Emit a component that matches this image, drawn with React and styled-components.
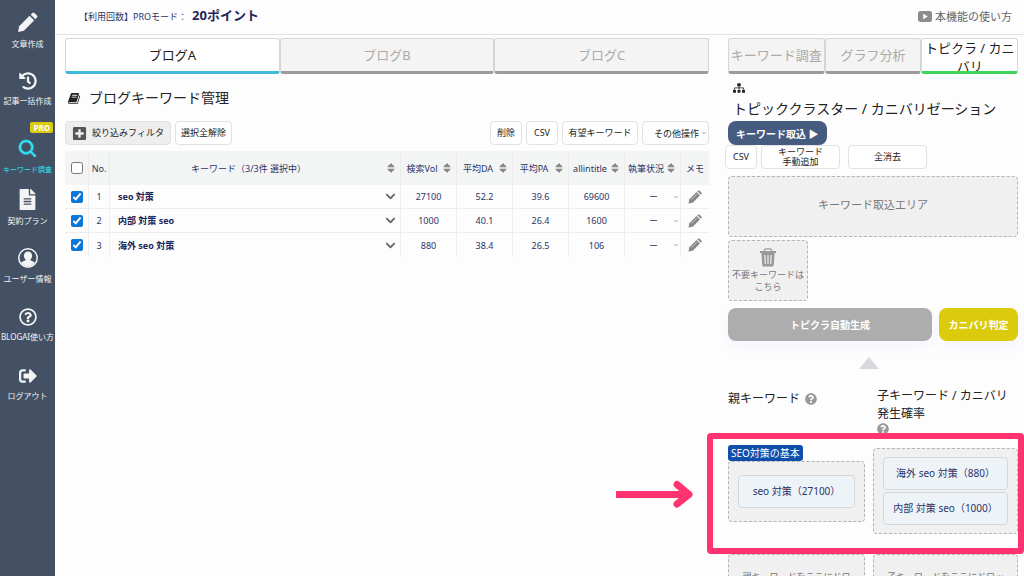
import styled, { createGlobalStyle, ThemeProvider } from "styled-components";
import {
  FaChevronDown,
  FaFileAlt,
  FaHistory,
  FaPlusSquare,
  FaQuestionCircle,
  FaRegQuestionCircle,
  FaSignOutAlt,
  FaSitemap,
  FaSort,
} from "react-icons/fa";
import { IoSearch } from "react-icons/io5";

const theme = {
  colors: {
    sidebar: "#445164",
    navy: "#2b3467",
    text: "#222",
    muted: "#aaa",
    line: "#e2e2e2",
    panel: "#f0f0f0",
    cyan: "#2fe0f5",
    yellow: "#dccb0d",
    mark: "#ff3370",
  },
};

const GlobalStyle = createGlobalStyle`
  * {
    box-sizing: border-box;
  }

  body {
    margin: 0;
    background: #fdfdfe;
    color: ${theme.colors.text};
    font-family: "Noto Sans", "Noto Sans CJK JP", sans-serif;
    font-size: 10px;
  }

  button, select, input {
    font: inherit;
    color: inherit;
    margin: 0;
  }

  h1, h2, h3, p {
    margin: 0;
    font-weight: 400;
  }
`;

const Page = styled.div`
  display: flex;
  height: 100vh;
  overflow: hidden;
`;

const Sidebar = styled.nav`
  flex: none;
  width: 55px;
  background: ${({ theme }) => theme.colors.sidebar};
`;

const NavItem = styled.a`
  display: flex;
  flex-direction: column;
  align-items: center;
  justify-content: center;
  gap: 5px;
  height: 59px;
  padding-top: 2px;
  color: ${({ theme, $active }) => ($active ? theme.colors.cyan : "#f4f4f4")};
  font-size: ${({ $active }) => ($active ? "7px" : "8px")};
  line-height: 12px;
  text-decoration: none;
  white-space: nowrap;

  svg {
    flex: none;
  }
`;

const ProBadge = styled.span`
  align-self: flex-end;
  margin-right: 2px;
  padding: 0 3px;
  border-radius: 2px;
  background: ${({ theme }) => theme.colors.yellow};
  color: white;
  font-size: 8px;
  font-weight: 700;
  line-height: 11px;
`;

const Main = styled.div`
  flex: 1;
  min-width: 0;
  display: flex;
  flex-direction: column;
`;

const Header = styled.header`
  display: flex;
  align-items: center;
  justify-content: space-between;
  flex: none;
  height: 35px;
  padding: 0 12px 6px 24px;
  border-bottom: 1px solid ${({ theme }) => theme.colors.line};
`;

const Usage = styled.p`
  color: ${({ theme }) => theme.colors.navy};
  font-size: 9px;

  strong {
    margin-left: 5px;
    font-size: 13px;
    color: #1d2659;
  }
`;

const HelpLink = styled.a`
  display: flex;
  align-items: center;
  gap: 3px;
  padding-top: 4px;
  color: #666;
  font-size: 11px;
  text-decoration: none;
`;

const Content = styled.div`
  display: grid;
  grid-template-columns: minmax(0, 1fr) 290px;
  gap: 19px;
  padding: 3px 6px 0 10px;
`;

const Tabs = styled.div`
  display: flex;
`;

const Tab = styled.button`
  flex: 1 1 0;
  min-width: 0;
  height: 36px;
  display: flex;
  align-items: safe center;
  justify-content: center;
  overflow: hidden;
  padding: 0;
  border: 1px solid #d6d6d6;
  border-bottom: 3px solid ${({ $accent }) => $accent || "#9c9c9c"};
  border-radius: 3px;
  background: ${({ $accent }) => ($accent ? "white" : "#f4f4f4")};
  color: ${({ theme, $accent }) => ($accent ? theme.colors.text : theme.colors.muted)};
  font-size: 13px;
  line-height: 18px;
`;

const Title = styled.h1`
  display: flex;
  align-items: center;
  gap: 8px;
  margin: 12px 0 11px;
  padding-left: 3px;
  font-size: 14px;
  line-height: 24px;
`;

const Toolbar = styled.div`
  display: flex;
  gap: 4px;
  margin-bottom: 6px;
`;

const Spacer = styled.div`
  flex: 1;
`;

const Button = styled.button`
  display: flex;
  align-items: center;
  justify-content: center;
  gap: 5px;
  width: ${({ $width }) => $width};
  height: 24px;
  padding: 0;
  border: 1px solid ${({ theme }) => theme.colors.line};
  border-radius: 4px;
  background: ${({ $filled }) => ($filled ? "#eee" : "white")};
  font-size: 9px;
  line-height: 10px;
  white-space: nowrap;
`;

const SelectBox = styled.label`
  display: flex;
  align-items: center;
  width: ${({ $width }) => $width};
  height: ${({ $bordered }) => ($bordered ? "24px" : "auto")};
  padding-right: 2px;
  border: ${({ theme, $bordered }) => ($bordered ? `1px solid ${theme.colors.line}` : "none")};
  border-radius: 4px;
  font-size: 9px;

  svg {
    flex: none;
    color: #999;
  }
`;

const Select = styled.select`
  flex: 1;
  min-width: 0;
  appearance: none;
  padding: 0 0 0 8px;
  border: none;
  background: none;
  text-align-last: center;
`;

const Table = styled.table`
  width: 100%;
  table-layout: fixed;
  border-collapse: separate;
  border-spacing: 0;
  color: ${({ theme }) => theme.colors.navy};
  font-size: 9px;
`;

const Col = styled.col`
  width: ${({ $width }) => $width};
`;

const Th = styled.th`
  height: 34px;
  padding: 0 2px;
  border-right: 1px solid #ebebeb;
  background: #f3f4f4;
  font-weight: 400;
  white-space: nowrap;

  &:last-child {
    border-right: none;
  }
`;

const Sortable = styled.div`
  display: flex;
  align-items: center;
  justify-content: space-between;
  padding-right: 1px;

  span {
    flex: 1;
  }

  svg {
    flex: none;
    color: #888;
  }
`;

const Td = styled.td`
  height: 24px;
  padding: 0;
  border-right: 1px solid #eee;
  border-bottom: 1px solid #eee;
  text-align: center;

  &:last-child {
    border-right: none;
  }

  tr:last-child & {
    border-bottom: none;
  }
`;

const Keyword = styled.div`
  display: flex;
  align-items: center;
  justify-content: space-between;
  padding: 0 4px 0 8px;
  color: #1d2659;
  font-weight: 700;

  svg {
    color: #666;
  }
`;

const Checkbox = styled.input`
  display: block;
  width: 12px;
  height: 12px;
  margin: 0 auto;
  accent-color: #0a78d6;
`;

const IconButton = styled.button`
  display: flex;
  margin: 0 auto;
  padding: 0;
  border: none;
  background: none;
  color: #888;
`;

const Panel = styled.aside`
  display: flex;
  flex-direction: column;
`;

const PanelTitle = styled.h2`
  display: flex;
  flex-direction: column;
  gap: 5px;
  margin: 8px 0 2px;
  padding-left: 5px;
  font-size: 14px;
  line-height: 20px;
  white-space: nowrap;
`;

const ImportButton = styled.button`
  align-self: flex-start;
  height: 24px;
  padding: 0 8px;
  border: none;
  border-radius: 8px;
  background: #465b80;
  color: white;
  font-weight: 700;
`;

const ClusterTools = styled.div`
  display: flex;
  gap: 4px;
  margin: 0 0 7px -3px;

  button:last-child {
    margin-left: 4px;
  }
`;

const DropArea = styled.div`
  display: flex;
  flex-direction: column;
  align-items: center;
  justify-content: center;
  gap: 2px;
  width: ${({ $width }) => $width || "auto"};
  min-height: 61px;
  padding: ${({ $padding }) => $padding || "0"};
  border: 1px dashed #b4b4b4;
  border-radius: 4px;
  background: ${({ theme }) => theme.colors.panel};
  color: #777;
`;

const AreaText = styled.p`
  font-size: ${({ $size }) => $size};
  line-height: ${({ $line }) => $line || "16px"};
  text-align: center;
`;

const Stack = styled.div`
  display: grid;
  gap: 3px;
`;

const Actions = styled.div`
  display: grid;
  grid-template-columns: 1fr 79px;
  gap: 7px;
  margin-top: 7px;
`;

const ActionButton = styled.button`
  height: 33px;
  padding: 0;
  border: none;
  border-radius: 8px;
  background: ${({ $color }) => $color};
  box-shadow: 0 6px 12px rgba(120, 120, 220, 0.06);
  color: white;
  font-weight: 700;
`;

const Triangle = styled.svg`
  align-self: center;
  margin: 16px 8px 18px 0;
`;

const Columns = styled.div`
  position: relative;
  display: grid;
  grid-template-columns: 137px minmax(0, 1fr);
  gap: 8px;
  align-items: start;
`;

const ColumnTitle = styled.h3`
  display: flex;
  flex-wrap: wrap;
  align-items: center;
  column-gap: 5px;
  padding: ${({ $padding }) => $padding};
  font-size: 12px;
  line-height: 18px;

  svg {
    color: #999;
  }
`;

const ClusterRow = styled(Columns)`
  margin: 10px 0 20px;
`;

const Cluster = styled.section`
  padding-top: ${({ $offset }) => $offset || "0"};
`;

const ClusterLabel = styled.h3`
  width: max-content;
  padding: 0 3px;
  border-radius: 3px;
  background: #104eac;
  color: white;
  font-size: 10px;
  line-height: 16px;
`;

const Card = styled.div`
  width: 100%;
  margin-bottom: ${({ $last }) => ($last ? "0" : "2px")};
  border: 1px solid #d4d8dd;
  border-radius: 4px;
  background: #eef3f8;
  color: ${({ theme }) => theme.colors.navy};
  line-height: 31px;
  text-align: center;
  white-space: nowrap;
`;

const Cards = styled.div`
  width: 100%;
`;

const Highlight = styled.div`
  position: absolute;
  inset: -12px -6px -20px -21px;
  border: 6px solid ${({ theme }) => theme.colors.mark};
  border-radius: 4px;
  pointer-events: none;
`;

const Arrow = styled.svg`
  position: absolute;
  top: 35px;
  left: -112px;
`;

const BookIcon = () => (
  <svg width="13" height="13" viewBox="0 0 1792 1792" fill="currentColor">
    <path d="M1639 478q40 57 18 129l-275 906q-19 64-76.5 107.5t-122.5 43.5h-923q-77 0-148.5-53.5t-99.5-131.5q-24-67-2-127 0-4 3-27t4-37q1-8-3-21.5t-3-19.5q2-11 8-21t16.5-23.5 16.5-23.5q23-38 45-91.5t30-91.5q3-10 .5-30t-.5-28q3-11 17-28t17-23q21-36 42-92t25-90q1-9-2.5-32t.5-28q4-13 22-30.5t22-22.500q19-26 42.5-84.5t27.5-96.5q1-8-3-25.5t-2-26.5q2-8 9-18t18-23 17-21q8-12 16.5-30.5t15-35 16-36 19.5-32 26.5-23.5 36-11.5 47.5 5.5l-1 3q38-9 51-9h761q74 0 114 56t18 130l-274 906q-36 119-71.5 153.5t-128.5 34.5h-869q-27 0-38 15-11 16-1 43 24 70 144 70h923q29 0 56-15.5t35-41.5l300-987q7-22 5-57 38 15 59 43zm-1064 2q-4 13 2 22.5t20 9.5h608q13 0 25.5-9.5t16.5-22.5l21-64q4-13-2-22.5t-20-9.5h-608q-13 0-25.5 9.5t-16.5 22.5zm-83 256q-4 13 2 22.5t20 9.5h608q13 0 25.5-9.5t16.5-22.5l21-64q4-13-2-22.5t-20-9.5h-608q-13 0-25.5 9.5t-16.5 22.5z" />
  </svg>
);

const PencilIcon = ({ size }) => (
  <svg width={size} height={size} viewBox="0 0 24 24" fill="currentColor">
    <path d="M1.200 22.800l1.300-6.600L14.300 4.400l5.300 5.300L7.800 21.500z" />
    <path d="M15.700 3l1.900-1.900q1.100-1.100 2.300 0l3 3q1.100 1.200 0 2.300L21 8.300z" />
  </svg>
);

const MemoIcon = () => (
  <svg width="14" height="14" viewBox="0 0 24 24" fill="currentColor">
    <path d="M.8 23.200l1.500-7.400L14.500 3.600l5.900 5.900L8.200 21.700z" />
    <path d="M15.800 2.300L17 1.100q1.400-1.300 2.800 0l3.100 3.100q1.300 1.400 0 2.800l-1.200 1.200z" />
    <path d="M5.500 16.500L14.800 7.200" stroke="#d8d8d8" strokeWidth="1.300" />
  </svg>
);

const UserIcon = () => (
  <svg width="20" height="20" viewBox="0 0 20 20">
    <circle cx="10" cy="10" r="9.2" fill="none" stroke="currentColor" strokeWidth="1.5" />
    <path
      d="M10 3.6c2.5 0 4.1 1.8 4.1 4.1 0 1.700-.8 3.200-1.900 4 .3 1.100 3.700 1.300 4.600 3.200C15.300 17 12.900 18.400 10 18.400S4.700 17 3.200 14.900c.9-1.900 4.300-2.100 4.600-3.200-1.100-.8-1.900-2.300-1.900-4 0-2.300 1.600-4.100 4.100-4.100z"
      fill="currentColor"
    />
  </svg>
);

const VideoIcon = () => (
  <svg width="14" height="11" viewBox="0 0 14 11">
    <rect width="14" height="11" rx="2.500" fill="#8c8c8c" />
    <path d="M5.200 2.800v5.400l4.600-2.700z" fill="white" />
  </svg>
);

const TrashIcon = () => (
  <svg width="18" height="19" viewBox="0 0 18 19" fill="none" stroke="#999">
    <path d="M5.500 3V2Q5.500.8 6.700.8h4.600q1.200 0 1.200 1.200v1" strokeWidth="1.200" />
    <path d="M1 4h16" strokeWidth="2" />
    <path d="M2.400 5h13.200l-.9 12q-.1 1.500-1.500 1.500H4.800q-1.400 0-1.500-1.500z" fill="#999" stroke="none" />
    <path d="M5.900 7l.4 9M9 7v9M12.100 7l-.4 9" stroke="#f0f0f0" strokeWidth="1.200" />
  </svg>
);

const NAV_ITEMS = [
  { label: "文章作成", icon: <PencilIcon size={21} /> },
  { label: "記事一括作成", icon: <FaHistory size={18} /> },
  { label: "キーワード調査", icon: <IoSearch size={21} stroke="currentColor" strokeWidth={16} />, pro: true },
  { label: "契約プラン", icon: <FaFileAlt size={21} /> },
  { label: "ユーザー情報", icon: <UserIcon /> },
  { label: "BLOGAI使い方", icon: <FaRegQuestionCircle size={18} /> },
  { label: "ログアウト", icon: <FaSignOutAlt size={18} /> },
];

const COLUMNS = ["検索Vol", "平均DA", "平均PA", "allintitle", "執筆状況"];

const KEYWORDS = [
  { name: "seo 対策", values: ["27100", "52.2", "39.6", "69600"] },
  { name: "内部 対策 seo", values: ["1000", "40.1", "26.4", "1600"] },
  { name: "海外 seo 対策", values: ["880", "38.4", "26.5", "106"] },
];

const KeywordTable = () => (
  <Table>
    <colgroup>
      <Col $width="24px" />
      <Col $width="21px" />
      <Col />
      {COLUMNS.map((column) => (
        <Col key={column} $width="56px" />
      ))}
      <Col $width="28px" />
    </colgroup>
    <thead>
      <tr>
        <Th>
          <Checkbox type="checkbox" aria-label="全て選択" />
        </Th>
        <Th>No.</Th>
        <Th>
          <Sortable>
            <span>キーワード（3/3件 選択中）</span>
            <FaSort size={12} />
          </Sortable>
        </Th>
        {COLUMNS.map((column) => (
          <Th key={column}>
            <Sortable>
              <span>{column}</span>
              <FaSort size={12} />
            </Sortable>
          </Th>
        ))}
        <Th>メモ</Th>
      </tr>
    </thead>
    <tbody>
      {KEYWORDS.map(({ name, values }, i) => (
        <tr key={name}>
          <Td>
            <Checkbox type="checkbox" defaultChecked aria-label={name} />
          </Td>
          <Td>{i + 1}</Td>
          <Td>
            <Keyword>
              {name}
              <FaChevronDown size={11} />
            </Keyword>
          </Td>
          {values.map((value) => (
            <Td key={value}>{value}</Td>
          ))}
          <Td>
            <SelectBox>
              <Select aria-label="執筆状況">
                <option>ー</option>
              </Select>
              <FaChevronDown size={4} />
            </SelectBox>
          </Td>
          <Td>
            <IconButton aria-label="メモを編集">
              <MemoIcon />
            </IconButton>
          </Td>
        </tr>
      ))}
    </tbody>
  </Table>
);

const ClusterPanel = () => (
  <Panel>
    <Tabs>
      <Tab>キーワード調査</Tab>
      <Tab>グラフ分析</Tab>
      <Tab $accent="#3fd45c">トピクラ / カニバリ</Tab>
    </Tabs>
    <PanelTitle>
      <FaSitemap size={12} />
      トピッククラスター / カニバリゼーション
    </PanelTitle>
    <ImportButton>キーワード取込 ▶</ImportButton>
    <ClusterTools>
      <Button $width="32px">CSV</Button>
      <Button $width="79px">
        キーワード
        <br />
        手動追加
      </Button>
      <Button $width="79px">全消去</Button>
    </ClusterTools>
    <Stack>
      <DropArea $padding="0 0 4px">
        <AreaText $size="11px">キーワード取込エリア</AreaText>
      </DropArea>
      <DropArea $width="80px">
        <TrashIcon />
        <AreaText $size="9px" $line="12px">
          不要キーワードは
          <br />
          こちら
        </AreaText>
      </DropArea>
    </Stack>
    <Actions>
      <ActionButton $color="#adadad">トピクラ自動生成</ActionButton>
      <ActionButton $color="#dccb0d">カニバリ判定</ActionButton>
    </Actions>
    <Triangle width="20" height="12" viewBox="0 0 20 12" fill="#d8d9dc">
      <path d="M10 0l10 12H0z" />
    </Triangle>
    <Columns>
      <ColumnTitle $padding="3px 0 0">
        親キーワード
        <FaQuestionCircle size={12} />
      </ColumnTitle>
      <ColumnTitle $padding="0 0 0 4px">
        子キーワード / カニバリ発生確率
        <FaQuestionCircle size={12} />
      </ColumnTitle>
    </Columns>
    <ClusterRow>
      <Cluster>
        <ClusterLabel>SEO対策の基本</ClusterLabel>
        <DropArea $padding="0 9px">
          <Card $last>seo 対策（27100）</Card>
        </DropArea>
      </Cluster>
      <Cluster $offset="3px">
        <DropArea $padding="8px 9px">
          <Cards>
            <Card>海外 seo 対策（880）</Card>
            <Card $last>内部 対策 seo（1000）</Card>
          </Cards>
        </DropArea>
      </Cluster>
      <Highlight />
      <Arrow width="78" height="28" viewBox="0 0 78 28" fill="none" stroke={theme.colors.mark} strokeWidth="7">
        <path d="M0 14.500h70" />
        <path d="M61 4.500l12 10-12 9.500" strokeLinecap="round" strokeLinejoin="round" />
      </Arrow>
    </ClusterRow>
    <Columns>
      <DropArea $padding="0 11px">
        <AreaText $size="9px">親キーワードをここにドロップ</AreaText>
      </DropArea>
      <DropArea $padding="0 10px">
        <AreaText $size="9px">子キーワードをここにドロップ</AreaText>
      </DropArea>
    </Columns>
  </Panel>
);

const App = () => {
  return (
    <ThemeProvider theme={theme}>
      <GlobalStyle />
      <Page>
        <Sidebar>
          {NAV_ITEMS.map(({ label, icon, pro }) => (
            <NavItem key={label} href="#" $active={pro}>
              {pro && <ProBadge>PRO</ProBadge>}
              {icon}
              {label}
            </NavItem>
          ))}
        </Sidebar>
        <Main>
          <Header>
            <Usage>
              【利用回数】PROモード：<strong>20ポイント</strong>
            </Usage>
            <HelpLink href="#">
              <VideoIcon />
              本機能の使い方
            </HelpLink>
          </Header>
          <Content>
            <main>
              <Tabs>
                <Tab $accent="#41b9d9">ブログA</Tab>
                <Tab>ブログB</Tab>
                <Tab>ブログC</Tab>
              </Tabs>
              <Title>
                <BookIcon />
                ブログキーワード管理
              </Title>
              <Toolbar>
                <Button $width="106px" $filled>
                  <FaPlusSquare size={15} color="#555" />
                  絞り込みフィルタ
                </Button>
                <Button $width="57px">選択全解除</Button>
                <Spacer />
                <Button $width="32px">削除</Button>
                <Button $width="32px">CSV</Button>
                <Button $width="76px">有望キーワード</Button>
                <SelectBox $width="67px" $bordered>
                  <Select aria-label="その他操作">
                    <option>その他操作</option>
                  </Select>
                  <FaChevronDown size={4} />
                </SelectBox>
              </Toolbar>
              <KeywordTable />
            </main>
            <ClusterPanel />
          </Content>
        </Main>
      </Page>
    </ThemeProvider>
  );
};

export default App;
